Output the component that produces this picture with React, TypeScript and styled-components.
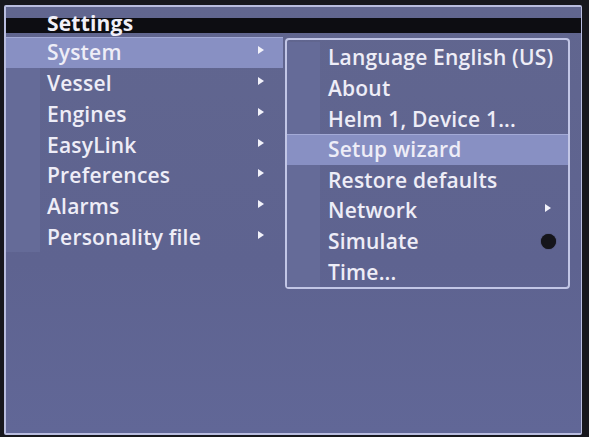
import React from "react";
import styled, { createGlobalStyle } from "styled-components";

const Global = createGlobalStyle`
  html, body { margin: 0; padding: 0; background: #17171d; }
  body { font-family: "Open Sans", "DejaVu Sans", sans-serif; }
`;

const Frame = styled.div`
  width: 589px;
  height: 437px;
  box-sizing: border-box;
  padding: 5px 7px 2px 4px;
  background: #17171d;
`;

const Screen = styled.div`
  height: 100%;
  box-sizing: border-box;
  border: 2px solid #b9bddf;
  border-right-width: 1px;
  border-radius: 2px;
  background: linear-gradient(180deg, #61668f 0%, #5e6390 60%, #616797 100%);
  display: flex;
  flex-direction: column;
  overflow: hidden;
`;

const Header = styled.div`
  margin-top: 11px;
  height: 15px;
  background: #0d0d12;
  display: flex;
  align-items: flex-end;
  padding-left: 41px;
`;

const Title = styled.div`
  font-weight: 700;
  font-size: 21px;
  line-height: 21px;
  letter-spacing: 0.2px;
  color: #f1f0f8;
  margin-bottom: -1px;
`;

const Body = styled.div`
  display: flex;
  gap: 2px;
  margin-top: 4px;
`;

const MainMenu = styled.div`
  width: 277px;
  display: flex;
  flex-direction: column;
`;

const Panel = styled.div`
  width: 285px;
  box-sizing: border-box;
  margin-top: 1px;
  height: 251px;
  border: 2px solid #c2c6e6;
  border-radius: 4px;
  padding-top: 2px;
  display: flex;
  flex-direction: column;
`;

const Row = styled.div<{ $active?: boolean; $trail: number; $lead: number }>`
  height: 30.75px;
  display: grid;
  grid-template-columns: ${(p) => p.$lead}px 1fr ${(p) => p.$trail}px;
  align-items: stretch;
  background: ${(p) => (p.$active ? "#8890c3" : "transparent")};
  box-shadow: ${(p) => (p.$active ? "inset 0 1px 0 #a3aad6" : "none")};
`;

const Lead = styled.div<{ $active?: boolean }>`
  background: ${(p) => (p.$active ? "transparent" : "#656b98")};
`;

const Label = styled.div<{ $pad: number }>`
  padding-left: ${(p) => p.$pad}px;
  display: flex;
  align-items: center;
  font-size: 21px;
  font-weight: 600;
  color: #eeedf7;
  white-space: nowrap;
  letter-spacing: 0.2px;
  overflow: visible;
`;

const Trail = styled.div`
  display: flex;
  align-items: center;
  justify-content: center;
`;

const Arrow = styled.div`
  width: 0;
  height: 0;
  border-top: 4.5px solid transparent;
  border-bottom: 4.5px solid transparent;
  border-left: 6px solid #f2f2fa;
  margin-top: -4px;
`;

const Dot = styled.div`
  width: 15px;
  height: 15px;
  border-radius: 50%;
  background: #15151b;
  box-shadow: 0 0 1px #15151b;
`;

type Item = { label: string; trail?: "arrow" | "dot"; active?: boolean };

const mainItems: Item[] = [
  { label: "System", trail: "arrow", active: true },
  { label: "Vessel", trail: "arrow" },
  { label: "Engines", trail: "arrow" },
  { label: "EasyLink", trail: "arrow" },
  { label: "Preferences", trail: "arrow" },
  { label: "Alarms", trail: "arrow" },
  { label: "Personality file", trail: "arrow" },
];

const subItems: Item[] = [
  { label: "Language English (US)" },
  { label: "About" },
  { label: "Helm 1, Device 1..." },
  { label: "Setup wizard", active: true },
  { label: "Restore defaults" },
  { label: "Network", trail: "arrow" },
  { label: "Simulate", trail: "dot" },
  { label: "Time..." },
];

function MenuRow({ item, lead, pad, trail }: { item: Item; lead: number; pad: number; trail: number }) {
  return (
    <Row $active={item.active} $lead={lead} $trail={trail}>
      <Lead $active={item.active} />
      <Label $pad={pad}>{item.label}</Label>
      <Trail>
        {item.trail === "arrow" && <Arrow />}
        {item.trail === "dot" && <Dot />}
      </Trail>
    </Row>
  );
}

export default function App() {
  return (
    <>
      <Global />
      <Frame>
        <Screen>
          <Header>
            <Title>Settings</Title>
          </Header>
          <Body>
            <MainMenu>
              {mainItems.map((it) => (
                <MenuRow key={it.label} item={it} lead={34} pad={7} trail={44} />
              ))}
            </MainMenu>
            <Panel>
              {subItems.map((it) => (
                <MenuRow key={it.label} item={it} lead={33} pad={8} trail={40} />
              ))}
            </Panel>
          </Body>
        </Screen>
      </Frame>
    </>
  );
}
